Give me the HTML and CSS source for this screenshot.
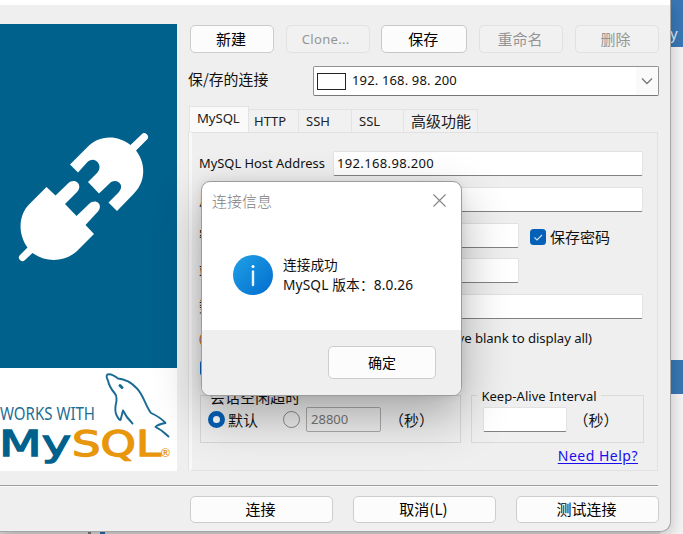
FILE: index.html
```html
<!DOCTYPE html>
<html lang="zh-CN">
<head>
<meta charset="utf-8">
<title>连接</title>
<link rel="stylesheet" href="styles.css">
</head>
<body>
<div class="desktop">
  <div class="backdrop-right">
    <div class="backdrop-head">y</div>
    <div class="backdrop-band"></div>
  </div>
  <div class="backdrop-bottom"><i class="tick"></i><i class="tick blue"></i></div>

  <main class="window">
    <div class="titlebar"></div>
    <div class="columns">
      <aside class="banner">
        <svg class="plug" viewBox="0 0 177 344" width="177" height="344">
          <g fill="#fff">
            <path d="M70 140.500L87 123.500C98 111 117 110 130.500 121L141.500 110.500A3.700 3.700 0 0 1 147 115.500L136 126.500C147 141 145 159 133.500 170L117 187L108.500 178.500L118.500 168.500C126 161 116 153 109.500 159.500L99 169.500L88 158L97.500 148.500C104 141 94 131 87 138.500L78 148.500Z"/>
            <path d="M46.500 163L55.500 171.500L68 159.500C75 153 83.500 161 77 168L65 180L76.500 192L89 180C96 173.500 104 181 97.500 188L85.500 201L94 210L76.500 227.500C63 239 45 238 32.500 229L25 236A3.500 3.500 0 0 1 20 231L27.500 223.500C17 209 19 190 29.500 180Z"/>
          </g>
        </svg>
        <svg class="works" viewBox="0 368 177 103" width="177" height="103">
          <g fill="none" stroke="#1a6b94" stroke-width="1.900" stroke-linejoin="round" stroke-linecap="round">
            <path d="M168.500 436.500C165 433 161 429.500 155.500 427Q157.500 424.500 165.500 423Q160 417 151 413C145 405 144 396 137 388.500C130 381 124 379 118 378.500C113 374.500 110 373.500 107.500 374.500C105.500 376 107 378.500 108 380.500C109 386 111 389 114.500 393C118 397 116 398 116.500 401C115 407 115 413 117 416C118 418 119.500 420 120.500 420C121.500 417 122 414 123 410.500C126 417 128 419 132.500 423.500"/>
            <path d="M120 385.500l2 2" stroke-width="3"/>
          </g>
          <text class="works-text" x="0" y="419.500" textLength="95" lengthAdjust="spacingAndGlyphs">WORKS WITH</text>
          <text class="my" x="-1" y="455.500" textLength="72" lengthAdjust="spacingAndGlyphs">My</text>
          <text class="sql" x="72" y="455.500" textLength="89" lengthAdjust="spacingAndGlyphs">SQL</text>
          <text class="reg" x="161" y="457">®</text>
        </svg>
      </aside>

      <section class="content">
        <div class="toolbar">
          <button class="btn">新建</button>
          <button class="btn off">Clone...</button>
          <button class="btn wide">保存</button>
          <button class="btn off">重命名</button>
          <button class="btn off">删除</button>
        </div>
        <div class="saved">
          <label>保/存的连接</label>
          <div class="combo"><i class="swatch"></i><span class="combo-value">192. 168. 98. 200</span>
            <span class="drop"><svg width="12" height="8" viewBox="0 0 12 8"><path d="M1 1.500L6 6.500L11 1.500" fill="none" stroke="#777" stroke-width="1.300"/></svg></span>
          </div>
        </div>
        <nav class="tabs">
          <span class="tab active">MySQL</span><span class="tab t2">HTTP</span><span class="tab t3">SSH</span><span class="tab t4">SSL</span><span class="tab t5">高级功能</span>
        </nav>
        <div class="panel">
          <div class="row"><label class="host">MySQL Host Address</label><div class="input"><span class="ip">192.168.98.200</span></div></div>
          <div class="row"><label>用户名</label><div class="input"></div></div>
          <div class="row"><label>密码</label><div class="input short"></div>
            <span class="check"><svg width="16" height="16" viewBox="0 0 16 16"><rect width="16" height="16" rx="3.500" fill="#0560b8"/><path d="M4.500 8.500L7 11L12 6" fill="none" stroke="#cfe2f5" stroke-width="1.100"/></svg>保存密码</span>
          </div>
          <div class="row"><label>端口</label><div class="input short"></div></div>
          <div class="row"><label>数据/库</label><div class="input"></div></div>
          <div class="hint"><span class="paren">(</span><span>Leave blank to display all)</span></div>
          <div class="compress"><svg width="16" height="16" viewBox="0 0 16 16"><rect width="16" height="16" rx="3.500" fill="#0560b8"/></svg></div>
          <div class="groups">
            <fieldset class="group timeout">
              <legend>会话空闲超时</legend>
              <div class="group-body">
                <i class="radio on"></i><span class="cjk">默认</span><i class="radio second"></i>
                <span class="num">28800</span><span class="unit">（秒）</span>
              </div>
            </fieldset>
            <fieldset class="group alive">
              <legend>Keep-Alive Interval</legend>
              <div class="group-body"><div class="input small"></div><span class="unit">（秒）</span></div>
            </fieldset>
          </div>
          <a class="help" href="#">Need Help?</a>
        </div>
      </section>
    </div>
    <hr class="rule">
    <footer class="actions">
      <button class="btn">连接</button>
      <button class="btn">取消(L)</button>
      <button class="btn">测试连接</button>
    </footer>
  </main>

  <div class="dialog">
    <header class="dialog-head"><span>连接信息</span>
      <svg width="13" height="13" viewBox="0 0 13 13"><path d="M.5 .5L12.500 12.500M12.500 .5L.5 12.500" stroke="#858585" stroke-width="1.100"/></svg>
    </header>
    <div class="dialog-body">
      <svg width="40" height="40" viewBox="0 0 40 40">
        <defs><linearGradient id="info" x1="0" y1="0" x2="1" y2="1"><stop offset=".1" stop-color="#1c9ce4"/><stop offset=".9" stop-color="#0571d0"/></linearGradient></defs>
        <circle cx="20" cy="20" r="20" fill="url(#info)"/><circle cx="20" cy="11.500" r="1.500" fill="#fff"/><path d="M20 16.500V30" stroke="#e8f5ff" stroke-width="2.400" stroke-linecap="round"/>
      </svg>
      <div class="message"><div>连接成功</div><div class="version">MySQL 版本：8.0.26</div></div>
    </div>
    <div class="dialog-foot"><button class="btn ok">确定</button></div>
  </div>
</div>
</body>
</html>
```
FILE: styles.css
```css
* { box-sizing: border-box; }
body { margin: 0; overflow: hidden; font-family: "Noto Sans", "Noto Sans CJK SC", sans-serif; font-size: 13px; color: #111; }
.desktop { position: relative; width: 683px; height: 534px; overflow: hidden; background: #efefef; }
.backdrop-right { position: absolute; left: 660px; top: 0; width: 23px; height: 534px; background: #f4f4f4; }
.backdrop-head { height: 47px; background: #3977b5; color: #dce9f5; padding: 23px 0 0 10px; line-height: 20px; font-size: 15px; }
.backdrop-band { height: 34px; margin-top: 313px; background: #3977b3; }
.backdrop-bottom { position: absolute; left: 0; top: 520px; width: 660px; height: 14px; display: flex; gap: 9px; padding-left: 88px; background: #d8d8d8; }
.tick { width: 3px; background: #777; }
.tick.blue { width: 5px; background: #2c67a5; }

.window { position: relative; width: 671px; height: 532px; background: #efefef; border: solid #a5a5a5; border-width: 0 1px 1px 0; border-radius: 0 0 10px 0; box-shadow: 0 5px 16px rgba(0,0,0,.22); }
.titlebar { height: 5px; background: #fff; }
.columns { display: flex; height: 480px; padding-top: 19px; }
.banner { width: 177px; height: 447px; background: #fff; display: flex; flex-direction: column; }
.plug { display: block; background: #00618c; }
.works { display: block; }
.works-text { font: 18px "Noto Sans"; fill: #1f6d94; }
.my, .sql { font: 35px "DejaVu Sans"; stroke-width: 1.3px; }
.my { fill: #00618c; stroke: #00618c; }
.sql { fill: #e8960c; stroke: #e8960c; }
.reg { font: bold 12px "Liberation Sans"; fill: #e8960c; }

.content { width: 470px; margin-left: 12px; }
.toolbar { display: flex; height: 43px; padding: 1px 0 0 1px; gap: 12px; }
.btn { width: 84px; height: 28px; padding: 0 0 1px; border: 1px solid #cdcdcd; border-radius: 5px; background: #fcfcfc; font: 15px "Noto Sans CJK SC", sans-serif; color: #000; line-height: 24px; }
.toolbar .btn { margin-right: -.35px; padding-right: 2px; }
.btn.wide { width: 86px; border-color: #c8c8c8; }
.btn.off { background: #f1f1f1; border-color: #e1e1e1; color: #959595; }
.toolbar .btn.off:nth-child(2) { font: 13px "Noto Sans"; letter-spacing: .3px; padding-right: 4px; }

.saved { display: flex; height: 40px; align-items: flex-start; justify-content: space-between; }
.saved label { font: 14.900px/23px "Noto Sans CJK SC"; margin-left: -1px; }
.combo { width: 346px; height: 30px; margin: -1px 0 0; background: #fff; border: 1px solid #929292; border-bottom-color: #777; border-radius: 2px; display: flex; align-items: center; padding-left: 3px; }
.swatch { width: 29px; height: 17px; border: 1px solid #222; }
.combo-value { margin-left: 6px; margin-top: -2px; font: 13px "Noto Sans"; letter-spacing: .15px; }
.drop { margin-left: auto; width: 22px; height: 28px; display: flex; align-items: center; justify-content: center; background: #fafafa; }

.tabs { display: flex; align-items: flex-end; height: 25px; }
.tab { height: 23px; border: 1px solid #e3e3e3; border-left: 0; border-bottom: 0; background: #f1f1f1; line-height: 23px; padding-left: 5px; color: #222; }
.tab.active { width: 60px; height: 26px; background: #fafafa; padding-left: 7px; line-height: 23px; border-left: 1px solid #e3e3e3; font-size: 13.200px; letter-spacing: -.1px; }
.t2 { width: 50px; } .t3 { width: 53px; padding-left: 7px; } .t4 { width: 52px; padding-left: 7px; }
.t5 { width: 74px; padding-left: 7px; font: 15px/22px "Noto Sans CJK SC"; white-space: nowrap; }

.panel { height: 339px; width: 469px; border: 1px solid #e1e1e1; border-left: 3px solid #f8f8f8; box-shadow: -1px 0 #e3e3e3; padding: 18px 13px 0 7px; }
.row { display: flex; height: 35.750px; }
.row label { width: 134px; flex: none; line-height: 24px; white-space: nowrap; font-size: 15px; }
.row label.host { font-size: 12.900px; line-height: 25px; }
.input { width: 310px; height: 25px; background: #fff; border: 1px solid #e2e2e2; border-bottom: 1px solid #828282; border-radius: 2px; }
.input.short { width: 186px; }
.ip { margin-left: 3px; line-height: 22px; font-size: 13px; letter-spacing: .35px; }
.check { display: flex; align-items: center; height: 28px; margin-left: 11px; gap: 4px; font: 15px "Noto Sans CJK SC"; }
.hint { height: 31px; line-height: 20px; display: flex; justify-content: space-between; padding-right: 52px; margin-top: -2px; font-size: 13.200px; letter-spacing: -.08px; }
.paren { color: #b06a10; }
.compress { height: 35px; padding-top: 1px; }
.compress svg { margin-left: 1px; }
.groups { display: flex; gap: 10px; height: 48px; margin-top: 1px; margin-left: 1px; }
.group { position: relative; margin: 0; padding: 0; min-width: 0; height: 48px; border: 1px solid #dadada; }
.group.timeout { border-color: rgba(0,0,0,.1); }
.group legend { position: absolute; top: -10px; left: 5px; padding: 0 4px; height: 20px; line-height: 20px; white-space: nowrap; background: #efefef; font-size: 13px; letter-spacing: .05px; }
.timeout { width: 262px; } .alive { width: 173px; }
.group.timeout legend { font: 15px/22px "Noto Sans CJK SC"; background: transparent; }
.group-body { display: flex; align-items: center; height: 25px; margin-top: 11px; padding-left: 7px; }
.radio { width: 17px; height: 17px; flex: none; border: 1px solid #888; border-radius: 50%; background: #eee; }
.radio.on { border: 5px solid #0560b8; background: #fff; }
.radio.second { margin-left: 25px; }
.cjk { font: 15px "Noto Sans CJK SC"; margin-left: 3px; }
.num { width: 75px; height: 25px; border: 1px solid #aaa; margin-left: 6px; padding-left: 4px; line-height: 23px; color: #777; border-radius: 2px; }
.unit { font: 15px "Noto Sans CJK SC"; margin-left: 8px; }
.small { width: 84px; margin-left: 4px; }
.alive .unit { margin-left: 6px; }
.help { display: block; text-align: right; margin: 2px 6px 0 0; line-height: 22px; font-size: 14px; letter-spacing: .5px; color: #1a0cf0; text-underline-offset: 2px; }
.rule { width: 658px; margin: 0; border: 0; height: 2px; background: #9d9d9d; border-bottom: 1px solid #fafafa; }
.actions { display: flex; justify-content: space-between; width: 659px; padding: 9px 0 0 190px; }
.actions .btn { width: 143px; height: 27px; padding-right: 2px; }

.dialog { position: absolute; left: 201px; top: 181px; width: 261px; height: 215px; background: #fff; border: 1px solid #9c9c9c; border-radius: 9px; box-shadow: 0 20px 48px rgba(0,0,0,.30), 0 0 10px rgba(0,0,0,.08); }
.dialog-head { display: flex; justify-content: space-between; align-items: center; height: 38px; padding: 0 15px 2px 10px; font: 300 15px "Noto Sans CJK SC"; color: #808080; }
.dialog-body { display: flex; align-items: center; height: 110px; padding: 0 0 0 31px; gap: 10px; }
.message { font: 13.700px/20px "Noto Sans", "Noto Sans CJK SC"; }
.version { font-size: 13.700px; letter-spacing: .15px; white-space: nowrap; }
.dialog-foot { height: 65px; display: flex; justify-content: flex-end; padding: 16px 25px 0 0; background: #efefef; border-radius: 0 0 8px 8px; }
.ok { width: 108px; height: 33px; font-size: 14px; line-height: 30px; }
```
